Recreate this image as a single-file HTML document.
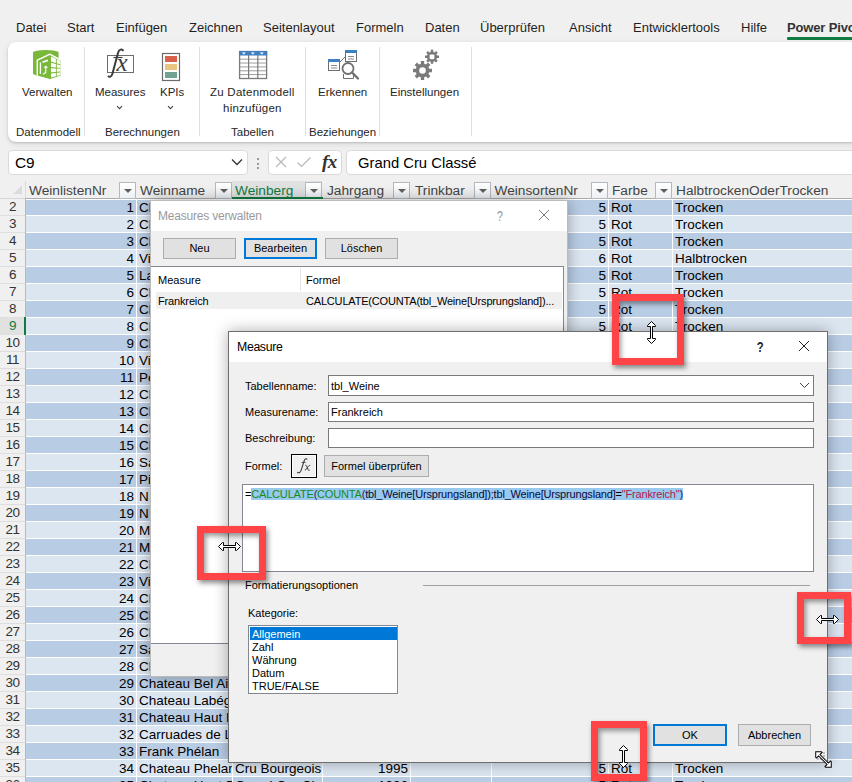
<!DOCTYPE html>
<html><head><meta charset="utf-8">
<style>
*{box-sizing:border-box;margin:0;padding:0}
html,body{width:852px;height:782px;overflow:hidden}
body{position:relative;background:#f0f0f0;font-family:"Liberation Sans",sans-serif;color:#262626}
.a{position:absolute;white-space:nowrap}
.tab{position:absolute;white-space:nowrap;top:20px;font-size:13px;line-height:16px;color:#1f1f1f}
.rib{position:absolute;left:8px;top:42px;width:860px;height:100px;background:#fff;border-radius:8px;box-shadow:0 1px 2px rgba(0,0,0,0.16),0 2px 7px rgba(0,0,0,0.10)}
.sep{position:absolute;top:47px;width:1px;height:89px;background:#e0e0e0}
.rl{position:absolute;font-size:11.5px;line-height:14px;color:#262626;white-space:nowrap}
.gl{position:absolute;font-size:11.5px;line-height:14px;color:#262626;white-space:nowrap}
.hdr{position:absolute;top:182.5px;height:16px;font-size:13.7px;line-height:16px;color:#444;white-space:nowrap}
.fb{position:absolute;top:182px;width:17px;height:16.5px;border:1px solid #b3b9c1;background:linear-gradient(#ffffff,#edf0f4)}
.fb:after{content:"";position:absolute;left:4px;top:6px;border-left:4px solid transparent;border-right:4px solid transparent;border-top:4px solid #606060}
.rh{position:absolute;left:0;width:25px;height:17px;font-size:13.5px;letter-spacing:-0.4px;line-height:16px;color:#333;text-align:center;border-bottom:1px solid #dedede}
.c{position:absolute;height:16px;font-size:13.5px;line-height:17px;color:#000;overflow:hidden;white-space:nowrap}
.r{text-align:right}
.dk{background:#b8cce4}
.lt{background:#dce6f1}
.dlg{position:absolute;background:#f0f0f0;border:1px solid #6e6e6e;box-shadow:0 0 14px rgba(0,0,0,0.32)}
.df{font-size:11px;line-height:13px;color:#000;position:absolute;white-space:nowrap}
.btn{position:absolute;background:#e1e1e1;border:1px solid #adadad;font-size:11px;line-height:18px;text-align:center;color:#000}
.red{position:absolute;border:7px solid #fe4446;box-shadow:2px 3px 5px rgba(0,0,0,0.45), inset 2px 3px 5px rgba(0,0,0,0.4)}
</style></head><body>

<!-- tabs -->
<div class="tab" style="left:16px">Datei</div>
<div class="tab" style="left:67px">Start</div>
<div class="tab" style="left:116px">Einfügen</div>
<div class="tab" style="left:189px">Zeichnen</div>
<div class="tab" style="left:263px">Seitenlayout</div>
<div class="tab" style="left:356px">Formeln</div>
<div class="tab" style="left:425px">Daten</div>
<div class="tab" style="left:480px">Überprüfen</div>
<div class="tab" style="left:569px">Ansicht</div>
<div class="tab" style="left:633px">Entwicklertools</div>
<div class="tab" style="left:741px">Hilfe</div>
<div class="tab" style="left:787px;font-weight:bold;color:#333;letter-spacing:-0.15px">Power Pivot</div>
<div class="a" style="left:787px;top:37px;width:70px;height:2.5px;background:#107c41;border-radius:1px"></div>

<!-- ribbon -->
<div class="rib"></div>
<div class="sep" style="left:84px"></div>
<div class="sep" style="left:199px"></div>
<div class="sep" style="left:305px"></div>
<div class="sep" style="left:379px"></div>
<div class="sep" style="left:471px"></div>

<div class="rl" style="left:22px;top:85px">Verwalten</div>
<div class="rl" style="left:95px;top:85px">Measures</div>
<div class="rl" style="left:160px;top:85px">KPIs</div>
<div class="rl" style="left:210px;top:85px;letter-spacing:0.25px">Zu Datenmodell</div>
<div class="rl" style="left:223px;top:101px;letter-spacing:0.25px">hinzufügen</div>
<div class="rl" style="left:318px;top:85px">Erkennen</div>
<div class="rl" style="left:390px;top:85px">Einstellungen</div>
<div class="gl" style="left:16px;top:125px">Datenmodell</div>
<div class="gl" style="left:105px;top:125px">Berechnungen</div>
<div class="gl" style="left:231px;top:125px">Tabellen</div>
<div class="gl" style="left:309px;top:125px">Beziehungen</div>

<!-- ribbon icons -->
<svg class="a" style="left:32px;top:49px" width="30" height="32" viewBox="0 0 30 32">
 <ellipse cx="13.8" cy="3.6" rx="12.8" ry="2.6" fill="#7ab83c"/>
 <path d="M1 3.6 L26.6 3.6 L26.6 9.5 L17.9 5.2 L5.3 11.1 L5.3 27 L1 25 Z" fill="#7ab83c"/>
 <path d="M5.3 11.1 L17.9 5.2 L28.8 11.1 L28.8 27 L17.9 30.5 L5.3 27 Z" fill="#7ab83c" stroke="#fff" stroke-width="0.9"/>
 <path d="M5.3 27.5 L5.3 11.1 L17.9 5.2 L28.8 11.1" fill="none" stroke="#fff" stroke-width="1.2"/>
 <path d="M18.99 7.50 L23.89 9.85 L23.89 14.08 L18.99 12.61Z M18.99 13.83 L23.89 15.09 L23.89 18.51 L18.99 17.97Z M18.99 19.19 L23.89 19.52 L23.89 22.94 L18.99 23.33Z M18.99 24.55 L23.89 23.95 L23.89 27.17 L18.99 28.44Z M24.77 10.27 L28.04 11.85 L28.04 15.32 L24.77 14.34Z M24.77 15.31 L28.04 16.15 L28.04 18.97 L24.77 18.61Z M24.77 19.57 L28.04 19.79 L28.04 22.61 L24.77 22.87Z M24.77 23.84 L28.04 23.44 L28.04 26.09 L24.77 26.94Z" fill="#fff"/>
 <g stroke="#fff" stroke-width="1.3" fill="none">
  <path d="M8.4 13.5 L8.4 25"/>
  <path d="M10.5 12.3 L16 10.4 L16 12.2 L10.5 14.1Z" fill="#fff" stroke="none"/>
  <path d="M13.8 17.2 L13.8 23.4 L11 25.2" stroke-width="1.1"/>
  <path d="M12.2 18.9 L13.8 17.2 L15.4 18.9" stroke-width="1.1"/>
 </g>
</svg>
<svg class="a" style="left:104px;top:46px" width="34" height="34" viewBox="0 0 34 34">
 <rect x="3.5" y="9.5" width="26" height="17" fill="none" stroke="#6d6d6d" stroke-width="1"/>
 <path d="M19.5 4.8 C18 2.8 15 3 14 7 L8.5 27.5 C7.5 31 5.5 31.5 4 30" fill="none" stroke="#3d3d3d" stroke-width="2"/>
 <path d="M9.5 11.5 L18.5 11.5" stroke="#3d3d3d" stroke-width="1.2"/>
 <text x="12.5" y="25" font-family="Liberation Serif" font-style="italic" font-size="25" fill="#3d3d3d">x</text>
</svg>
<svg class="a" style="left:161px;top:52px" width="20" height="30" viewBox="0 0 20 30">
 <rect x="1.5" y="1.5" width="17" height="27" fill="#fff" stroke="#6b6b6b" stroke-width="1.2"/>
 <rect x="4" y="4" width="12" height="6" fill="#d9604a"/>
 <rect x="4" y="12" width="12" height="6" fill="#ebc57f"/>
 <rect x="4" y="20" width="12" height="6" fill="#6fa392"/>
</svg>
<svg class="a" style="left:116px;top:105px" width="7" height="5" viewBox="0 0 7 5"><path d="M1 1.2 L3.5 3.7 L6 1.2" fill="none" stroke="#444" stroke-width="1.1"/></svg>
<svg class="a" style="left:167px;top:105px" width="7" height="5" viewBox="0 0 7 5"><path d="M1 1.2 L3.5 3.7 L6 1.2" fill="none" stroke="#444" stroke-width="1.1"/></svg>
<svg class="a" style="left:238px;top:50px" width="30" height="30" viewBox="0 0 30 30">
 <rect x="1.6" y="1.5" width="27" height="27" fill="#fff" stroke="#7a7a7a" stroke-width="1.3"/>
 <rect x="1" y="1" width="28.2" height="4.5" fill="#3f7fc2"/>
 <path d="M3.8 2.6 L7.8 2.6 L5.8 4.6Z M12.8 2.6 L16.8 2.6 L14.8 4.6Z M21.8 2.6 L25.8 2.6 L23.8 4.6Z" fill="#fff"/>
 <g stroke="#9c9c9c" stroke-width="1"><path d="M2 9.2 H28 M2 13 H28 M2 16.9 H28 M2 20.8 H28 M2 24.6 H28"/></g>
 <g stroke="#7a7a7a" stroke-width="1.2"><path d="M10.6 5 V28 M19.8 5 V28"/></g>
</svg>
<svg class="a" style="left:326px;top:49px" width="34" height="32" viewBox="0 0 34 32">
 <rect x="2.5" y="10.5" width="11" height="11" fill="#fff" stroke="#6e6e6e" stroke-width="1"/>
 <rect x="2" y="10" width="12" height="3" fill="#3f7fc2"/>
 <path d="M5 16.5 H11 M5 19 H11" stroke="#7a7a7a" stroke-width="0.9"/>
 <rect x="19.5" y="1.5" width="11" height="11" fill="#fff" stroke="#6e6e6e" stroke-width="1"/>
 <rect x="19" y="1" width="12" height="3" fill="#3f7fc2"/>
 <path d="M22 7.5 H28 M22 10 H28" stroke="#7a7a7a" stroke-width="0.9"/>
 <path d="M14 13 L19 8" stroke="#6e6e6e" stroke-width="1"/>
 <path d="M17.5 25 V29.5 H27.5 V25" fill="#fff" stroke="#6e6e6e" stroke-width="1"/>
 <circle cx="22" cy="19.5" r="5.5" fill="#fff" stroke="#707070" stroke-width="1.8"/>
 <path d="M26 23.5 L32 29.5" stroke="#707070" stroke-width="2.4" stroke-linecap="round"/>
</svg>
<svg class="a" style="left:410px;top:48px" width="32" height="34" viewBox="0 0 32 34">
 <path d="M10.84 15.80 L10.81 13.05 L14.19 13.05 L14.16 15.80 L16.06 16.59 L17.99 14.62 L20.38 17.01 L18.41 18.94 L19.20 20.84 L21.95 20.81 L21.95 24.19 L19.20 24.16 L18.41 26.06 L20.38 27.99 L17.99 30.38 L16.06 28.41 L14.16 29.20 L14.19 31.95 L10.81 31.95 L10.84 29.20 L8.94 28.41 L7.01 30.38 L4.62 27.99 L6.59 26.06 L5.80 24.16 L3.05 24.19 L3.05 20.81 L5.80 20.84 L6.59 18.94 L4.62 17.01 L7.01 14.62 L8.94 16.59Z" fill="#7a7a7a"/>
 <circle cx="12.5" cy="22.5" r="3.3" fill="#fff"/>
 <path d="M20.77 3.85 L20.75 1.81 L23.25 1.81 L23.23 3.85 L24.63 4.43 L26.06 2.98 L27.82 4.74 L26.37 6.17 L26.95 7.57 L28.99 7.55 L28.99 10.05 L26.95 10.03 L26.37 11.43 L27.82 12.86 L26.06 14.62 L24.63 13.17 L23.23 13.75 L23.25 15.79 L20.75 15.79 L20.77 13.75 L19.37 13.17 L17.94 14.62 L16.18 12.86 L17.63 11.43 L17.05 10.03 L15.01 10.05 L15.01 7.55 L17.05 7.57 L17.63 6.17 L16.18 4.74 L17.94 2.98 L19.37 4.43Z" fill="#7a7a7a"/>
 <rect x="19.6" y="6.4" width="4.8" height="4.8" rx="1.2" fill="#fff"/>
</svg>

<!-- formula bar -->
<div class="a" style="left:8px;top:150px;width:240px;height:25px;background:#fff;border:1px solid #dadada;border-radius:4px"></div>
<div class="a" style="left:15px;top:153.5px;font-size:15.4px;line-height:18px;color:#000">C9</div>
<svg class="a" style="left:231px;top:158px" width="12" height="8" viewBox="0 0 12 8"><path d="M1 1.5 L6 6.5 L11 1.5" fill="none" stroke="#333" stroke-width="1.3"/></svg>
<div class="a" style="left:257px;top:158px;width:2px;height:2px;background:#9a9a9a"></div>
<div class="a" style="left:257px;top:162.5px;width:2px;height:2px;background:#9a9a9a"></div>
<div class="a" style="left:257px;top:167px;width:2px;height:2px;background:#9a9a9a"></div>
<div class="a" style="left:268px;top:150px;width:74px;height:25px;background:#fff;border:1px solid #dadada;border-radius:4px"></div>
<svg class="a" style="left:274px;top:155px" width="14" height="14" viewBox="0 0 14 14"><path d="M2 2 L12 12 M12 2 L2 12" stroke="#b8b8b8" stroke-width="1.2"/></svg>
<svg class="a" style="left:296px;top:155px" width="16" height="14" viewBox="0 0 16 14"><path d="M1.5 7.5 L5.5 11.5 L14.5 2.5" fill="none" stroke="#b8b8b8" stroke-width="1.2"/></svg>
<div class="a" style="left:322px;top:151px;font-family:'Liberation Serif';font-style:italic;font-weight:bold;font-size:19px;line-height:22px;color:#333;letter-spacing:-0.5px">fx</div>
<div class="a" style="left:346px;top:150px;width:520px;height:25px;background:#fff;border:1px solid #dadada;border-radius:4px"></div>
<div class="a" style="left:358px;top:154px;font-size:14.8px;line-height:18px;color:#000">Grand Cru Classé</div>

<!-- column headers -->
<div class="a" style="left:0;top:181px;width:852px;height:18px;background:#f0f0f0"></div>
<div class="a" style="left:0;top:198px;width:25px;height:1px;background:#d8d8d8"></div>
<div class="a" style="left:25px;top:198px;width:827px;height:1px;background:#ababab"></div>
<div class="a" style="left:25px;top:181px;width:1px;height:17px;background:#dadada"></div>
<div class="a" style="left:25px;top:198px;width:1px;height:584px;background:#b9b9b9"></div>
<svg class="a" style="left:13px;top:185px" width="10" height="10" viewBox="0 0 10 10"><path d="M9 0 L9 9 L0 9Z" fill="#dcdcdc"/></svg>
<div class="a" style="left:232px;top:181px;width:90px;height:17px;background:#e1e1e1"></div>
<div class="hdr" style="left:29px">WeinlistenNr</div>
<div class="hdr" style="left:140px">Weinname</div>
<div class="hdr" style="left:235px;color:#107c41">Weinberg</div>
<div class="hdr" style="left:327px">Jahrgang</div>
<div class="hdr" style="left:415px">Trinkbar</div>
<div class="hdr" style="left:494.5px">WeinsortenNr</div>
<div class="hdr" style="left:612px">Farbe</div>
<div class="hdr" style="left:676px">HalbtrockenOderTrocken</div>
<div class="fb" style="left:119px"></div>
<div class="fb" style="left:215px"></div>
<div class="fb" style="left:305px"></div>
<div class="fb" style="left:393px"></div>
<div class="fb" style="left:474px"></div>
<div class="fb" style="left:591px"></div>
<div class="fb" style="left:655px"></div>
<div class="a" style="left:232px;top:197px;width:91px;height:2px;background:#107c41"></div>
<div class="a" style="left:26px;top:199px;width:830px;height:590px;background:#fff"></div>
<div class="rh" style="top:199px;">2</div>
<div class="c dk" style="left:26px;top:200px;width:110px;height:15px"></div>
<div class="c dk" style="left:137px;top:200px;width:95px;height:15px"></div>
<div class="c dk" style="left:233px;top:200px;width:89px;height:15px"></div>
<div class="c dk" style="left:323px;top:200px;width:87px;height:15px"></div>
<div class="c dk" style="left:411px;top:200px;width:80px;height:15px"></div>
<div class="c dk" style="left:492px;top:200px;width:116px;height:15px"></div>
<div class="c dk" style="left:609px;top:200px;width:63px;height:15px"></div>
<div class="c dk" style="left:673px;top:200px;width:227px;height:15px"></div>
<div class="c r" style="left:26px;top:199px;width:108px">1</div>
<div class="c" style="left:139px;top:199px;width:93px">Chateau</div>
<div class="c r" style="left:492px;top:199px;width:114px">5</div>
<div class="c" style="left:611px;top:199px;width:61px">Rot</div>
<div class="c" style="left:675px;top:199px;width:225px">Trocken</div>
<div class="rh" style="top:216px;">3</div>
<div class="c lt" style="left:26px;top:216px;width:110px"></div>
<div class="c lt" style="left:137px;top:216px;width:95px"></div>
<div class="c lt" style="left:233px;top:216px;width:89px"></div>
<div class="c lt" style="left:323px;top:216px;width:87px"></div>
<div class="c lt" style="left:411px;top:216px;width:80px"></div>
<div class="c lt" style="left:492px;top:216px;width:116px"></div>
<div class="c lt" style="left:609px;top:216px;width:63px"></div>
<div class="c lt" style="left:673px;top:216px;width:227px"></div>
<div class="c r" style="left:26px;top:216px;width:108px">2</div>
<div class="c" style="left:139px;top:216px;width:93px">Chateau</div>
<div class="c r" style="left:492px;top:216px;width:114px">5</div>
<div class="c" style="left:611px;top:216px;width:61px">Rot</div>
<div class="c" style="left:675px;top:216px;width:225px">Trocken</div>
<div class="rh" style="top:233px;">4</div>
<div class="c dk" style="left:26px;top:233px;width:110px"></div>
<div class="c dk" style="left:137px;top:233px;width:95px"></div>
<div class="c dk" style="left:233px;top:233px;width:89px"></div>
<div class="c dk" style="left:323px;top:233px;width:87px"></div>
<div class="c dk" style="left:411px;top:233px;width:80px"></div>
<div class="c dk" style="left:492px;top:233px;width:116px"></div>
<div class="c dk" style="left:609px;top:233px;width:63px"></div>
<div class="c dk" style="left:673px;top:233px;width:227px"></div>
<div class="c r" style="left:26px;top:233px;width:108px">3</div>
<div class="c" style="left:139px;top:233px;width:93px">Chateau</div>
<div class="c r" style="left:492px;top:233px;width:114px">5</div>
<div class="c" style="left:611px;top:233px;width:61px">Rot</div>
<div class="c" style="left:675px;top:233px;width:225px">Trocken</div>
<div class="rh" style="top:250px;">5</div>
<div class="c lt" style="left:26px;top:250px;width:110px"></div>
<div class="c lt" style="left:137px;top:250px;width:95px"></div>
<div class="c lt" style="left:233px;top:250px;width:89px"></div>
<div class="c lt" style="left:323px;top:250px;width:87px"></div>
<div class="c lt" style="left:411px;top:250px;width:80px"></div>
<div class="c lt" style="left:492px;top:250px;width:116px"></div>
<div class="c lt" style="left:609px;top:250px;width:63px"></div>
<div class="c lt" style="left:673px;top:250px;width:227px"></div>
<div class="c r" style="left:26px;top:250px;width:108px">4</div>
<div class="c" style="left:139px;top:250px;width:93px">Vieux</div>
<div class="c r" style="left:492px;top:250px;width:114px">6</div>
<div class="c" style="left:611px;top:250px;width:61px">Rot</div>
<div class="c" style="left:675px;top:250px;width:225px">Halbtrocken</div>
<div class="rh" style="top:267px;">6</div>
<div class="c dk" style="left:26px;top:267px;width:110px"></div>
<div class="c dk" style="left:137px;top:267px;width:95px"></div>
<div class="c dk" style="left:233px;top:267px;width:89px"></div>
<div class="c dk" style="left:323px;top:267px;width:87px"></div>
<div class="c dk" style="left:411px;top:267px;width:80px"></div>
<div class="c dk" style="left:492px;top:267px;width:116px"></div>
<div class="c dk" style="left:609px;top:267px;width:63px"></div>
<div class="c dk" style="left:673px;top:267px;width:227px"></div>
<div class="c r" style="left:26px;top:267px;width:108px">5</div>
<div class="c" style="left:139px;top:267px;width:93px">La</div>
<div class="c r" style="left:492px;top:267px;width:114px">5</div>
<div class="c" style="left:611px;top:267px;width:61px">Rot</div>
<div class="c" style="left:675px;top:267px;width:225px">Trocken</div>
<div class="rh" style="top:284px;">7</div>
<div class="c lt" style="left:26px;top:284px;width:110px"></div>
<div class="c lt" style="left:137px;top:284px;width:95px"></div>
<div class="c lt" style="left:233px;top:284px;width:89px"></div>
<div class="c lt" style="left:323px;top:284px;width:87px"></div>
<div class="c lt" style="left:411px;top:284px;width:80px"></div>
<div class="c lt" style="left:492px;top:284px;width:116px"></div>
<div class="c lt" style="left:609px;top:284px;width:63px"></div>
<div class="c lt" style="left:673px;top:284px;width:227px"></div>
<div class="c r" style="left:26px;top:284px;width:108px">6</div>
<div class="c" style="left:139px;top:284px;width:93px">Chateau</div>
<div class="c r" style="left:492px;top:284px;width:114px">5</div>
<div class="c" style="left:611px;top:284px;width:61px">Rot</div>
<div class="c" style="left:675px;top:284px;width:225px">Trocken</div>
<div class="rh" style="top:301px;">8</div>
<div class="c dk" style="left:26px;top:301px;width:110px"></div>
<div class="c dk" style="left:137px;top:301px;width:95px"></div>
<div class="c dk" style="left:233px;top:301px;width:89px"></div>
<div class="c dk" style="left:323px;top:301px;width:87px"></div>
<div class="c dk" style="left:411px;top:301px;width:80px"></div>
<div class="c dk" style="left:492px;top:301px;width:116px"></div>
<div class="c dk" style="left:609px;top:301px;width:63px"></div>
<div class="c dk" style="left:673px;top:301px;width:227px"></div>
<div class="c r" style="left:26px;top:301px;width:108px">7</div>
<div class="c" style="left:139px;top:301px;width:93px">Chateau</div>
<div class="c r" style="left:492px;top:301px;width:114px">5</div>
<div class="c" style="left:611px;top:301px;width:61px">Rot</div>
<div class="c" style="left:675px;top:301px;width:225px">Trocken</div>
<div class="rh" style="top:318px;background:#e1e1e1;color:#107c41;">9</div>
<div class="a" style="left:24px;top:317px;width:2px;height:18px;background:#107c41"></div>
<div class="c lt" style="left:26px;top:318px;width:110px"></div>
<div class="c lt" style="left:137px;top:318px;width:95px"></div>
<div class="c lt" style="left:233px;top:318px;width:89px"></div>
<div class="c lt" style="left:323px;top:318px;width:87px"></div>
<div class="c lt" style="left:411px;top:318px;width:80px"></div>
<div class="c lt" style="left:492px;top:318px;width:116px"></div>
<div class="c lt" style="left:609px;top:318px;width:63px"></div>
<div class="c lt" style="left:673px;top:318px;width:227px"></div>
<div class="c r" style="left:26px;top:318px;width:108px">8</div>
<div class="c" style="left:139px;top:318px;width:93px">Chateau</div>
<div class="c r" style="left:492px;top:318px;width:114px">5</div>
<div class="c" style="left:611px;top:318px;width:61px">Rot</div>
<div class="c" style="left:675px;top:318px;width:225px">Trocken</div>
<div class="rh" style="top:335px;">10</div>
<div class="c dk" style="left:26px;top:335px;width:110px"></div>
<div class="c dk" style="left:137px;top:335px;width:95px"></div>
<div class="c dk" style="left:233px;top:335px;width:89px"></div>
<div class="c dk" style="left:323px;top:335px;width:87px"></div>
<div class="c dk" style="left:411px;top:335px;width:80px"></div>
<div class="c dk" style="left:492px;top:335px;width:116px"></div>
<div class="c dk" style="left:609px;top:335px;width:63px"></div>
<div class="c dk" style="left:673px;top:335px;width:227px"></div>
<div class="c r" style="left:26px;top:335px;width:108px">9</div>
<div class="c" style="left:139px;top:335px;width:93px">Chateau</div>
<div class="rh" style="top:352px;">11</div>
<div class="c lt" style="left:26px;top:352px;width:110px"></div>
<div class="c lt" style="left:137px;top:352px;width:95px"></div>
<div class="c lt" style="left:233px;top:352px;width:89px"></div>
<div class="c lt" style="left:323px;top:352px;width:87px"></div>
<div class="c lt" style="left:411px;top:352px;width:80px"></div>
<div class="c lt" style="left:492px;top:352px;width:116px"></div>
<div class="c lt" style="left:609px;top:352px;width:63px"></div>
<div class="c lt" style="left:673px;top:352px;width:227px"></div>
<div class="c r" style="left:26px;top:352px;width:108px">10</div>
<div class="c" style="left:139px;top:352px;width:93px">Vieux</div>
<div class="rh" style="top:369px;">12</div>
<div class="c dk" style="left:26px;top:369px;width:110px"></div>
<div class="c dk" style="left:137px;top:369px;width:95px"></div>
<div class="c dk" style="left:233px;top:369px;width:89px"></div>
<div class="c dk" style="left:323px;top:369px;width:87px"></div>
<div class="c dk" style="left:411px;top:369px;width:80px"></div>
<div class="c dk" style="left:492px;top:369px;width:116px"></div>
<div class="c dk" style="left:609px;top:369px;width:63px"></div>
<div class="c dk" style="left:673px;top:369px;width:227px"></div>
<div class="c r" style="left:26px;top:369px;width:108px">11</div>
<div class="c" style="left:139px;top:369px;width:93px">Pe</div>
<div class="rh" style="top:386px;">13</div>
<div class="c lt" style="left:26px;top:386px;width:110px"></div>
<div class="c lt" style="left:137px;top:386px;width:95px"></div>
<div class="c lt" style="left:233px;top:386px;width:89px"></div>
<div class="c lt" style="left:323px;top:386px;width:87px"></div>
<div class="c lt" style="left:411px;top:386px;width:80px"></div>
<div class="c lt" style="left:492px;top:386px;width:116px"></div>
<div class="c lt" style="left:609px;top:386px;width:63px"></div>
<div class="c lt" style="left:673px;top:386px;width:227px"></div>
<div class="c r" style="left:26px;top:386px;width:108px">12</div>
<div class="c" style="left:139px;top:386px;width:93px">Chateau</div>
<div class="rh" style="top:403px;">14</div>
<div class="c dk" style="left:26px;top:403px;width:110px"></div>
<div class="c dk" style="left:137px;top:403px;width:95px"></div>
<div class="c dk" style="left:233px;top:403px;width:89px"></div>
<div class="c dk" style="left:323px;top:403px;width:87px"></div>
<div class="c dk" style="left:411px;top:403px;width:80px"></div>
<div class="c dk" style="left:492px;top:403px;width:116px"></div>
<div class="c dk" style="left:609px;top:403px;width:63px"></div>
<div class="c dk" style="left:673px;top:403px;width:227px"></div>
<div class="c r" style="left:26px;top:403px;width:108px">13</div>
<div class="c" style="left:139px;top:403px;width:93px">Chateau</div>
<div class="rh" style="top:420px;">15</div>
<div class="c lt" style="left:26px;top:420px;width:110px"></div>
<div class="c lt" style="left:137px;top:420px;width:95px"></div>
<div class="c lt" style="left:233px;top:420px;width:89px"></div>
<div class="c lt" style="left:323px;top:420px;width:87px"></div>
<div class="c lt" style="left:411px;top:420px;width:80px"></div>
<div class="c lt" style="left:492px;top:420px;width:116px"></div>
<div class="c lt" style="left:609px;top:420px;width:63px"></div>
<div class="c lt" style="left:673px;top:420px;width:227px"></div>
<div class="c r" style="left:26px;top:420px;width:108px">14</div>
<div class="c" style="left:139px;top:420px;width:93px">Chateau</div>
<div class="rh" style="top:437px;">16</div>
<div class="c dk" style="left:26px;top:437px;width:110px"></div>
<div class="c dk" style="left:137px;top:437px;width:95px"></div>
<div class="c dk" style="left:233px;top:437px;width:89px"></div>
<div class="c dk" style="left:323px;top:437px;width:87px"></div>
<div class="c dk" style="left:411px;top:437px;width:80px"></div>
<div class="c dk" style="left:492px;top:437px;width:116px"></div>
<div class="c dk" style="left:609px;top:437px;width:63px"></div>
<div class="c dk" style="left:673px;top:437px;width:227px"></div>
<div class="c r" style="left:26px;top:437px;width:108px">15</div>
<div class="c" style="left:139px;top:437px;width:93px">Chateau</div>
<div class="rh" style="top:454px;">17</div>
<div class="c lt" style="left:26px;top:454px;width:110px"></div>
<div class="c lt" style="left:137px;top:454px;width:95px"></div>
<div class="c lt" style="left:233px;top:454px;width:89px"></div>
<div class="c lt" style="left:323px;top:454px;width:87px"></div>
<div class="c lt" style="left:411px;top:454px;width:80px"></div>
<div class="c lt" style="left:492px;top:454px;width:116px"></div>
<div class="c lt" style="left:609px;top:454px;width:63px"></div>
<div class="c lt" style="left:673px;top:454px;width:227px"></div>
<div class="c r" style="left:26px;top:454px;width:108px">16</div>
<div class="c" style="left:139px;top:454px;width:93px">Saint</div>
<div class="rh" style="top:471px;">18</div>
<div class="c dk" style="left:26px;top:471px;width:110px"></div>
<div class="c dk" style="left:137px;top:471px;width:95px"></div>
<div class="c dk" style="left:233px;top:471px;width:89px"></div>
<div class="c dk" style="left:323px;top:471px;width:87px"></div>
<div class="c dk" style="left:411px;top:471px;width:80px"></div>
<div class="c dk" style="left:492px;top:471px;width:116px"></div>
<div class="c dk" style="left:609px;top:471px;width:63px"></div>
<div class="c dk" style="left:673px;top:471px;width:227px"></div>
<div class="c r" style="left:26px;top:471px;width:108px">17</div>
<div class="c" style="left:139px;top:471px;width:93px">Pi</div>
<div class="rh" style="top:488px;">19</div>
<div class="c lt" style="left:26px;top:488px;width:110px"></div>
<div class="c lt" style="left:137px;top:488px;width:95px"></div>
<div class="c lt" style="left:233px;top:488px;width:89px"></div>
<div class="c lt" style="left:323px;top:488px;width:87px"></div>
<div class="c lt" style="left:411px;top:488px;width:80px"></div>
<div class="c lt" style="left:492px;top:488px;width:116px"></div>
<div class="c lt" style="left:609px;top:488px;width:63px"></div>
<div class="c lt" style="left:673px;top:488px;width:227px"></div>
<div class="c r" style="left:26px;top:488px;width:108px">18</div>
<div class="c" style="left:139px;top:488px;width:93px">N</div>
<div class="rh" style="top:505px;">20</div>
<div class="c dk" style="left:26px;top:505px;width:110px"></div>
<div class="c dk" style="left:137px;top:505px;width:95px"></div>
<div class="c dk" style="left:233px;top:505px;width:89px"></div>
<div class="c dk" style="left:323px;top:505px;width:87px"></div>
<div class="c dk" style="left:411px;top:505px;width:80px"></div>
<div class="c dk" style="left:492px;top:505px;width:116px"></div>
<div class="c dk" style="left:609px;top:505px;width:63px"></div>
<div class="c dk" style="left:673px;top:505px;width:227px"></div>
<div class="c r" style="left:26px;top:505px;width:108px">19</div>
<div class="c" style="left:139px;top:505px;width:93px">N</div>
<div class="rh" style="top:522px;">21</div>
<div class="c lt" style="left:26px;top:522px;width:110px"></div>
<div class="c lt" style="left:137px;top:522px;width:95px"></div>
<div class="c lt" style="left:233px;top:522px;width:89px"></div>
<div class="c lt" style="left:323px;top:522px;width:87px"></div>
<div class="c lt" style="left:411px;top:522px;width:80px"></div>
<div class="c lt" style="left:492px;top:522px;width:116px"></div>
<div class="c lt" style="left:609px;top:522px;width:63px"></div>
<div class="c lt" style="left:673px;top:522px;width:227px"></div>
<div class="c r" style="left:26px;top:522px;width:108px">20</div>
<div class="c" style="left:139px;top:522px;width:93px">M</div>
<div class="rh" style="top:539px;">22</div>
<div class="c dk" style="left:26px;top:539px;width:110px"></div>
<div class="c dk" style="left:137px;top:539px;width:95px"></div>
<div class="c dk" style="left:233px;top:539px;width:89px"></div>
<div class="c dk" style="left:323px;top:539px;width:87px"></div>
<div class="c dk" style="left:411px;top:539px;width:80px"></div>
<div class="c dk" style="left:492px;top:539px;width:116px"></div>
<div class="c dk" style="left:609px;top:539px;width:63px"></div>
<div class="c dk" style="left:673px;top:539px;width:227px"></div>
<div class="c r" style="left:26px;top:539px;width:108px">21</div>
<div class="c" style="left:139px;top:539px;width:93px">M</div>
<div class="rh" style="top:556px;">23</div>
<div class="c lt" style="left:26px;top:556px;width:110px"></div>
<div class="c lt" style="left:137px;top:556px;width:95px"></div>
<div class="c lt" style="left:233px;top:556px;width:89px"></div>
<div class="c lt" style="left:323px;top:556px;width:87px"></div>
<div class="c lt" style="left:411px;top:556px;width:80px"></div>
<div class="c lt" style="left:492px;top:556px;width:116px"></div>
<div class="c lt" style="left:609px;top:556px;width:63px"></div>
<div class="c lt" style="left:673px;top:556px;width:227px"></div>
<div class="c r" style="left:26px;top:556px;width:108px">22</div>
<div class="c" style="left:139px;top:556px;width:93px">Chateau</div>
<div class="rh" style="top:573px;">24</div>
<div class="c dk" style="left:26px;top:573px;width:110px"></div>
<div class="c dk" style="left:137px;top:573px;width:95px"></div>
<div class="c dk" style="left:233px;top:573px;width:89px"></div>
<div class="c dk" style="left:323px;top:573px;width:87px"></div>
<div class="c dk" style="left:411px;top:573px;width:80px"></div>
<div class="c dk" style="left:492px;top:573px;width:116px"></div>
<div class="c dk" style="left:609px;top:573px;width:63px"></div>
<div class="c dk" style="left:673px;top:573px;width:227px"></div>
<div class="c r" style="left:26px;top:573px;width:108px">23</div>
<div class="c" style="left:139px;top:573px;width:93px">Vieux</div>
<div class="rh" style="top:590px;">25</div>
<div class="c lt" style="left:26px;top:590px;width:110px"></div>
<div class="c lt" style="left:137px;top:590px;width:95px"></div>
<div class="c lt" style="left:233px;top:590px;width:89px"></div>
<div class="c lt" style="left:323px;top:590px;width:87px"></div>
<div class="c lt" style="left:411px;top:590px;width:80px"></div>
<div class="c lt" style="left:492px;top:590px;width:116px"></div>
<div class="c lt" style="left:609px;top:590px;width:63px"></div>
<div class="c lt" style="left:673px;top:590px;width:227px"></div>
<div class="c r" style="left:26px;top:590px;width:108px">24</div>
<div class="c" style="left:139px;top:590px;width:93px">Chateau</div>
<div class="rh" style="top:607px;">26</div>
<div class="c dk" style="left:26px;top:607px;width:110px"></div>
<div class="c dk" style="left:137px;top:607px;width:95px"></div>
<div class="c dk" style="left:233px;top:607px;width:89px"></div>
<div class="c dk" style="left:323px;top:607px;width:87px"></div>
<div class="c dk" style="left:411px;top:607px;width:80px"></div>
<div class="c dk" style="left:492px;top:607px;width:116px"></div>
<div class="c dk" style="left:609px;top:607px;width:63px"></div>
<div class="c dk" style="left:673px;top:607px;width:227px"></div>
<div class="c r" style="left:26px;top:607px;width:108px">25</div>
<div class="c" style="left:139px;top:607px;width:93px">Chateau</div>
<div class="rh" style="top:624px;">27</div>
<div class="c lt" style="left:26px;top:624px;width:110px"></div>
<div class="c lt" style="left:137px;top:624px;width:95px"></div>
<div class="c lt" style="left:233px;top:624px;width:89px"></div>
<div class="c lt" style="left:323px;top:624px;width:87px"></div>
<div class="c lt" style="left:411px;top:624px;width:80px"></div>
<div class="c lt" style="left:492px;top:624px;width:116px"></div>
<div class="c lt" style="left:609px;top:624px;width:63px"></div>
<div class="c lt" style="left:673px;top:624px;width:227px"></div>
<div class="c r" style="left:26px;top:624px;width:108px">26</div>
<div class="c" style="left:139px;top:624px;width:93px">Chateau</div>
<div class="rh" style="top:641px;">28</div>
<div class="c dk" style="left:26px;top:641px;width:110px"></div>
<div class="c dk" style="left:137px;top:641px;width:95px"></div>
<div class="c dk" style="left:233px;top:641px;width:89px"></div>
<div class="c dk" style="left:323px;top:641px;width:87px"></div>
<div class="c dk" style="left:411px;top:641px;width:80px"></div>
<div class="c dk" style="left:492px;top:641px;width:116px"></div>
<div class="c dk" style="left:609px;top:641px;width:63px"></div>
<div class="c dk" style="left:673px;top:641px;width:227px"></div>
<div class="c r" style="left:26px;top:641px;width:108px">27</div>
<div class="c" style="left:139px;top:641px;width:93px">Saint</div>
<div class="rh" style="top:658px;">29</div>
<div class="c lt" style="left:26px;top:658px;width:110px"></div>
<div class="c lt" style="left:137px;top:658px;width:95px"></div>
<div class="c lt" style="left:233px;top:658px;width:89px"></div>
<div class="c lt" style="left:323px;top:658px;width:87px"></div>
<div class="c lt" style="left:411px;top:658px;width:80px"></div>
<div class="c lt" style="left:492px;top:658px;width:116px"></div>
<div class="c lt" style="left:609px;top:658px;width:63px"></div>
<div class="c lt" style="left:673px;top:658px;width:227px"></div>
<div class="c r" style="left:26px;top:658px;width:108px">28</div>
<div class="c" style="left:139px;top:658px;width:93px">Chateau</div>
<div class="rh" style="top:675px;">30</div>
<div class="c dk" style="left:26px;top:675px;width:110px"></div>
<div class="c dk" style="left:137px;top:675px;width:95px"></div>
<div class="c dk" style="left:233px;top:675px;width:89px"></div>
<div class="c dk" style="left:323px;top:675px;width:87px"></div>
<div class="c dk" style="left:411px;top:675px;width:80px"></div>
<div class="c dk" style="left:492px;top:675px;width:116px"></div>
<div class="c dk" style="left:609px;top:675px;width:63px"></div>
<div class="c dk" style="left:673px;top:675px;width:227px"></div>
<div class="c r" style="left:26px;top:675px;width:108px">29</div>
<div class="c" style="left:139px;top:675px;width:93px">Chateau Bel Air</div>
<div class="rh" style="top:692px;">31</div>
<div class="c lt" style="left:26px;top:692px;width:110px"></div>
<div class="c lt" style="left:137px;top:692px;width:95px"></div>
<div class="c lt" style="left:233px;top:692px;width:89px"></div>
<div class="c lt" style="left:323px;top:692px;width:87px"></div>
<div class="c lt" style="left:411px;top:692px;width:80px"></div>
<div class="c lt" style="left:492px;top:692px;width:116px"></div>
<div class="c lt" style="left:609px;top:692px;width:63px"></div>
<div class="c lt" style="left:673px;top:692px;width:227px"></div>
<div class="c r" style="left:26px;top:692px;width:108px">30</div>
<div class="c" style="left:139px;top:692px;width:93px">Chateau Labégorce</div>
<div class="rh" style="top:709px;">32</div>
<div class="c dk" style="left:26px;top:709px;width:110px"></div>
<div class="c dk" style="left:137px;top:709px;width:95px"></div>
<div class="c dk" style="left:233px;top:709px;width:89px"></div>
<div class="c dk" style="left:323px;top:709px;width:87px"></div>
<div class="c dk" style="left:411px;top:709px;width:80px"></div>
<div class="c dk" style="left:492px;top:709px;width:116px"></div>
<div class="c dk" style="left:609px;top:709px;width:63px"></div>
<div class="c dk" style="left:673px;top:709px;width:227px"></div>
<div class="c r" style="left:26px;top:709px;width:108px">31</div>
<div class="c" style="left:139px;top:709px;width:93px">Chateau Haut Bages</div>
<div class="rh" style="top:726px;">33</div>
<div class="c lt" style="left:26px;top:726px;width:110px"></div>
<div class="c lt" style="left:137px;top:726px;width:95px"></div>
<div class="c lt" style="left:233px;top:726px;width:89px"></div>
<div class="c lt" style="left:323px;top:726px;width:87px"></div>
<div class="c lt" style="left:411px;top:726px;width:80px"></div>
<div class="c lt" style="left:492px;top:726px;width:116px"></div>
<div class="c lt" style="left:609px;top:726px;width:63px"></div>
<div class="c lt" style="left:673px;top:726px;width:227px"></div>
<div class="c r" style="left:26px;top:726px;width:108px">32</div>
<div class="c" style="left:139px;top:726px;width:93px">Carruades de Lafite</div>
<div class="rh" style="top:743px;">34</div>
<div class="c dk" style="left:26px;top:743px;width:110px"></div>
<div class="c dk" style="left:137px;top:743px;width:95px"></div>
<div class="c dk" style="left:233px;top:743px;width:89px"></div>
<div class="c dk" style="left:323px;top:743px;width:87px"></div>
<div class="c dk" style="left:411px;top:743px;width:80px"></div>
<div class="c dk" style="left:492px;top:743px;width:116px"></div>
<div class="c dk" style="left:609px;top:743px;width:63px"></div>
<div class="c dk" style="left:673px;top:743px;width:227px"></div>
<div class="c r" style="left:26px;top:743px;width:108px">33</div>
<div class="c" style="left:139px;top:743px;width:93px">Frank Phélan</div>
<div class="rh" style="top:760px;">35</div>
<div class="c lt" style="left:26px;top:760px;width:110px"></div>
<div class="c lt" style="left:137px;top:760px;width:95px"></div>
<div class="c lt" style="left:233px;top:760px;width:89px"></div>
<div class="c lt" style="left:323px;top:760px;width:87px"></div>
<div class="c lt" style="left:411px;top:760px;width:80px"></div>
<div class="c lt" style="left:492px;top:760px;width:116px"></div>
<div class="c lt" style="left:609px;top:760px;width:63px"></div>
<div class="c lt" style="left:673px;top:760px;width:227px"></div>
<div class="c r" style="left:26px;top:760px;width:108px">34</div>
<div class="c" style="left:139px;top:760px;width:93px">Chateau Phelan</div>
<div class="c" style="left:235px;top:760px;width:87px">Cru Bourgeois</div>
<div class="c r" style="left:323px;top:760px;width:85px">1995</div>
<div class="c r" style="left:492px;top:760px;width:114px">5</div>
<div class="c" style="left:611px;top:760px;width:61px">Rot</div>
<div class="c" style="left:675px;top:760px;width:225px">Trocken</div>
<div class="rh" style="top:777px;">36</div>
<div class="c dk" style="left:26px;top:777px;width:110px"></div>
<div class="c dk" style="left:137px;top:777px;width:95px"></div>
<div class="c dk" style="left:233px;top:777px;width:89px"></div>
<div class="c dk" style="left:323px;top:777px;width:87px"></div>
<div class="c dk" style="left:411px;top:777px;width:80px"></div>
<div class="c dk" style="left:492px;top:777px;width:116px"></div>
<div class="c dk" style="left:609px;top:777px;width:63px"></div>
<div class="c dk" style="left:673px;top:777px;width:227px"></div>
<div class="c r" style="left:26px;top:777px;width:108px">35</div>
<div class="c" style="left:139px;top:777px;width:93px">Chateau Haut B</div>
<div class="c" style="left:235px;top:777px;width:87px">Grand Cru Classé</div>
<div class="c r" style="left:323px;top:777px;width:85px">1996</div>
<div class="c r" style="left:492px;top:777px;width:114px">5</div>
<div class="c" style="left:611px;top:777px;width:61px">Rot</div>
<div class="c" style="left:675px;top:777px;width:225px">Trocken</div>
<!-- ===== Measures verwalten dialog ===== -->
<div class="dlg" style="left:150px;top:200px;width:418px;height:477px;border-color:rgba(0,0,0,0.22)"></div>
<div class="a" style="left:151px;top:201px;width:416px;height:30px;background:#fff"></div>
<div class="df" style="left:158px;top:210px;font-size:12px;letter-spacing:-0.2px;color:#9a9a9a">Measures verwalten</div>
<div class="df" style="left:495.5px;top:207.5px;font-size:14px;line-height:16px;color:#9a9a9a;transform:scaleX(0.8)">?</div>
<svg class="a" style="left:538px;top:209px" width="12" height="12" viewBox="0 0 12 12"><path d="M1 1 L11 11 M11 1 L1 11" stroke="#7a7a7a" stroke-width="1"/></svg>
<div class="btn" style="left:163px;top:238px;width:73px;height:21px">Neu</div>
<div class="btn" style="left:244px;top:238px;width:73px;height:21px;border:2px solid #0078d7;line-height:17px">Bearbeiten</div>
<div class="btn" style="left:325px;top:238px;width:73px;height:21px">Löschen</div>
<div class="a" style="left:151px;top:266px;width:413px;height:378px;background:#fff;border-top:1px solid #828790;border-right:1px solid #828790;border-bottom:1px solid #828790"></div>
<div class="a" style="left:300px;top:268px;width:1px;height:23px;background:#e5e5e5"></div>
<div class="df" style="left:158px;top:274px">Measure</div>
<div class="df" style="left:306px;top:274px">Formel</div>
<div class="a" style="left:156px;top:292px;width:406px;height:17px;background:#efefef"></div>
<div class="df" style="left:158px;top:295px;letter-spacing:-0.15px">Frankreich</div>
<div class="df" style="left:306px;top:295px;letter-spacing:-0.18px">CALCULATE(COUNTA(tbl_Weine[Ursprungsland])...</div>

<!-- ===== Measure dialog ===== -->
<div class="dlg" style="left:228px;top:331px;width:600px;height:432px"></div>
<div class="a" style="left:229px;top:332px;width:598px;height:30px;background:#fff"></div>
<div class="df" style="left:237px;top:341px;font-size:12.3px;letter-spacing:-0.35px">Measure</div>
<div class="df" style="left:755.5px;top:338.5px;font-size:14px;line-height:16px;color:#222;font-weight:bold;transform:scaleX(0.8)">?</div>
<svg class="a" style="left:798px;top:340px" width="12" height="12" viewBox="0 0 12 12"><path d="M1 1 L11 11 M11 1 L1 11" stroke="#222" stroke-width="1"/></svg>

<div class="df" style="left:245px;top:380px">Tabellenname:</div>
<div class="df" style="left:245px;top:406px">Measurename:</div>
<div class="df" style="left:245px;top:432px">Beschreibung:</div>
<div class="df" style="left:245px;top:460px">Formel:</div>
<div class="a" style="left:328px;top:375px;width:486px;height:21px;background:#fff;border:1px solid #7a7a7a"></div>
<div class="df" style="left:331px;top:380px">tbl_Weine</div>
<svg class="a" style="left:799px;top:382px" width="11" height="7" viewBox="0 0 11 7"><path d="M1 1 L5.5 5.5 L10 1" fill="none" stroke="#444" stroke-width="1"/></svg>
<div class="a" style="left:328px;top:402px;width:486px;height:20px;background:#fff;border:1px solid #7a7a7a"></div>
<div class="df" style="left:331px;top:406px">Frankreich</div>
<div class="a" style="left:328px;top:428px;width:486px;height:20px;background:#fff;border:1px solid #7a7a7a"></div>
<div class="a" style="left:291px;top:454px;width:26px;height:24px;background:#f0f0f0;border:1.5px solid #000;box-shadow:inset 0 0 0 1px #fff"></div>
<svg class="a" style="left:291px;top:454px" width="26" height="24" viewBox="0 0 26 24">
 <path d="M16.2 5.6 C15.8 4.3 14.2 4.3 13.4 6.2 L10.2 16.2 C9.3 19 7.6 19.2 6.2 18.2" fill="none" stroke="#3a3a3a" stroke-width="1.1"/>
 <path d="M10.6 8.5 L14.6 8.3" stroke="#3a3a3a" stroke-width="0.9"/>
 <path d="M14.2 11.4 C15.2 11 15.6 11.8 16 13 L17 15.5 C17.4 16.6 18 16.6 18.8 16 M19.2 11.4 C18.4 11.2 17.6 12 16.8 13 L15.4 15 C14.8 16 14.2 16.2 13.8 15.6" fill="none" stroke="#3a3a3a" stroke-width="1"/>
</svg>
<div class="btn" style="left:324px;top:455px;width:105px;height:22px;line-height:20px">Formel überprüfen</div>

<div class="a" style="left:242px;top:484px;width:572px;height:88px;background:#fff;border:1px solid #828790"></div>
<div class="df" style="left:245px;top:488px;font-size:11px;line-height:12px;letter-spacing:-0.18px;color:#0a0a3a"><span style="color:#000">=</span><span style="background:#99c9ef"><span style="color:#178a17">CALCULATE</span><span style="color:#26207a">(</span><span style="color:#178a17">COUNTA</span><span style="color:#26207a">(</span>tbl_Weine[Ursprungsland]);tbl_Weine[Ursprungsland]<span style="color:#000">=</span><span style="color:#b8154c">"Frankreich"</span><span style="color:#26207a">)</span></span></div>

<div class="df" style="left:245px;top:579px">Formatierungsoptionen</div>
<div class="a" style="left:423px;top:585px;width:387px;height:1px;background:#a0a0a0"></div>
<div class="df" style="left:248px;top:607px">Kategorie:</div>
<div class="a" style="left:248px;top:625px;width:150px;height:69px;background:#fff;border:1px solid #828790"></div>
<div class="a" style="left:250px;top:627px;width:147px;height:13px;background:#0078d7"></div>
<div class="df" style="left:252px;top:628px;color:#fff">Allgemein</div>
<div class="df" style="left:252px;top:641px">Zahl</div>
<div class="df" style="left:252px;top:654px">Währung</div>
<div class="df" style="left:252px;top:667px">Datum</div>
<div class="df" style="left:252px;top:680px">TRUE/FALSE</div>

<div class="btn" style="left:653px;top:724px;width:74px;height:22px;border:2px solid #0078d7;line-height:18px">OK</div>
<div class="btn" style="left:738px;top:724px;width:73px;height:22px;line-height:20px">Abbrechen</div>

<!-- ===== red highlight boxes ===== -->
<div class="red" style="left:612px;top:294px;width:72px;height:71px"></div>
<div class="red" style="left:197px;top:526px;width:69px;height:54px"></div>
<div class="red" style="left:797px;top:592px;width:54px;height:52px"></div>
<div class="red" style="left:591px;top:721px;width:56px;height:60px"></div>


<div class="a" style="left:823px;top:752px;width:2px;height:2px;background:#bdbdbd"></div><div class="a" style="left:823px;top:755px;width:2px;height:2px;background:#bdbdbd"></div><div class="a" style="left:823px;top:758px;width:2px;height:2px;background:#bdbdbd"></div><div class="a" style="left:820px;top:755px;width:2px;height:2px;background:#bdbdbd"></div><div class="a" style="left:820px;top:758px;width:2px;height:2px;background:#bdbdbd"></div><div class="a" style="left:817px;top:758px;width:2px;height:2px;background:#bdbdbd"></div>
<!-- cursors -->
<svg class="a" style="left:646px;top:320px" width="11" height="25" viewBox="0 0 11 25"><path d="M5.5 1.5 L9.5 5.5 L9.5 6.5 L6.5 6.5 L6.5 18.5 L9.5 18.5 L9.5 19.5 L5.5 23.5 L1.5 19.5 L1.5 18.5 L4.5 18.5 L4.5 6.5 L1.5 6.5 L1.5 5.5 Z" fill="#fff" stroke="#000" stroke-width="1"/></svg>
<svg class="a" style="left:618px;top:744px" width="11" height="25" viewBox="0 0 11 25"><path d="M5.5 1.5 L9.5 5.5 L9.5 6.5 L6.5 6.5 L6.5 18.5 L9.5 18.5 L9.5 19.5 L5.5 23.5 L1.5 19.5 L1.5 18.5 L4.5 18.5 L4.5 6.5 L1.5 6.5 L1.5 5.5 Z" fill="#fff" stroke="#000" stroke-width="1"/></svg>
<svg class="a" style="left:217px;top:541px" width="25" height="11" viewBox="0 0 25 11"><g transform="translate(25 0) rotate(90)"><path d="M5.5 1.5 L9.5 5.5 L9.5 6.5 L6.5 6.5 L6.5 18.5 L9.5 18.5 L9.5 19.5 L5.5 23.5 L1.5 19.5 L1.5 18.5 L4.5 18.5 L4.5 6.5 L1.5 6.5 L1.5 5.5 Z" fill="#fff" stroke="#000" stroke-width="1"/></g></svg>
<svg class="a" style="left:815px;top:614px" width="25" height="11" viewBox="0 0 25 11"><g transform="translate(25 0) rotate(90)"><path d="M5.5 1.5 L9.5 5.5 L9.5 6.5 L6.5 6.5 L6.5 18.5 L9.5 18.5 L9.5 19.5 L5.5 23.5 L1.5 19.5 L1.5 18.5 L4.5 18.5 L4.5 6.5 L1.5 6.5 L1.5 5.5 Z" fill="#fff" stroke="#000" stroke-width="1"/></g></svg>
<svg class="a" style="left:810px;top:746px" width="27" height="27" viewBox="0 0 27 27"><g transform="translate(13.5 13.5) rotate(-45) translate(-5.5 -12.5)"><path d="M5.5 1.5 L9.5 5.5 L9.5 6.5 L6.5 6.5 L6.5 18.5 L9.5 18.5 L9.5 19.5 L5.5 23.5 L1.5 19.5 L1.5 18.5 L4.5 18.5 L4.5 6.5 L1.5 6.5 L1.5 5.5 Z" fill="#fff" stroke="#000" stroke-width="1"/></g></svg>
</body></html>
